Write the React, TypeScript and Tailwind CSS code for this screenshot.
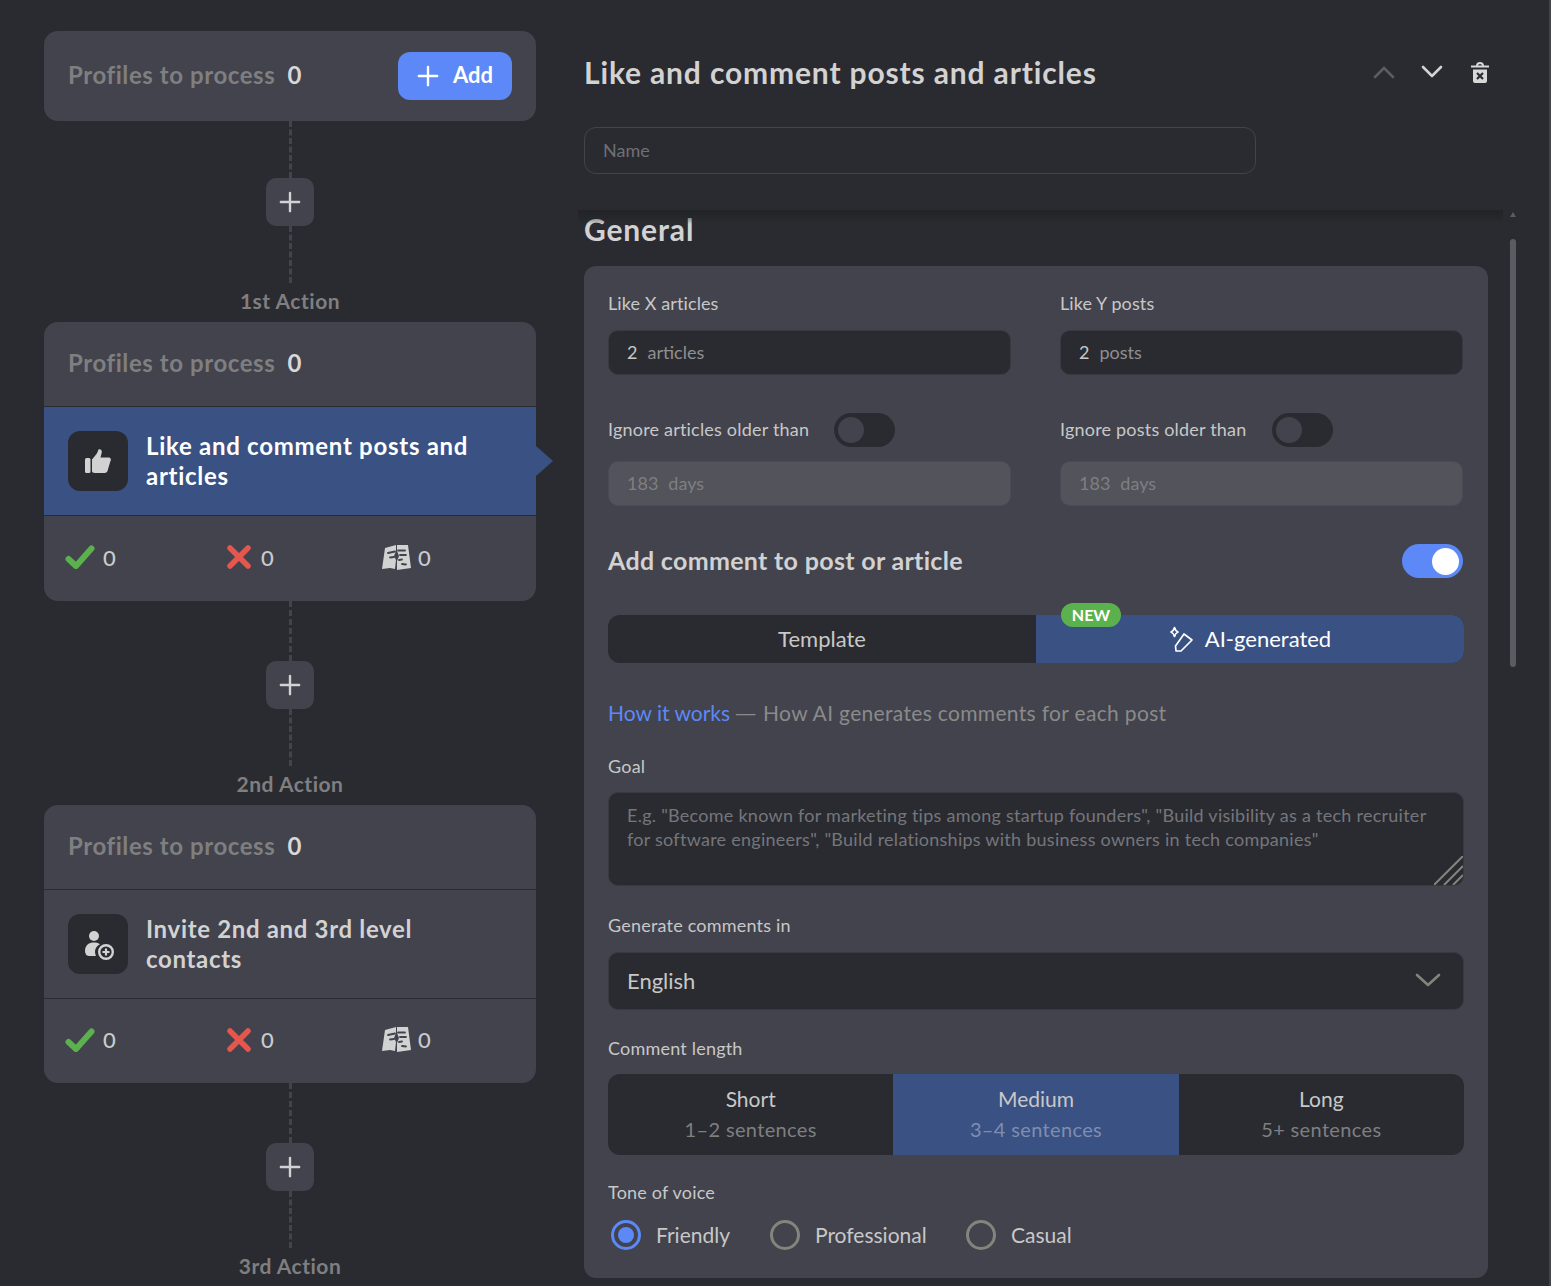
import React from "react";

const Plus = ({ s = 24, c = "#fff", w = 2.6 }: { s?: number; c?: string; w?: number }) => (
  <svg width={s} height={s} viewBox="0 0 24 24" fill="none" stroke={c} strokeWidth={w} strokeLinecap="round">
    <path d="M12 2v20M2 12h20" />
  </svg>
);

const Check = () => (
  <svg width="30" height="24" viewBox="0 0 30 24" fill="none" stroke="#5cb14f" strokeWidth="6" strokeLinecap="round" strokeLinejoin="round">
    <path d="M3.500 14l7.500 7L26.500 3.500" />
  </svg>
);
const Cross = () => (
  <svg width="26" height="24" viewBox="0 0 26 24" fill="none" stroke="#e5574e" strokeWidth="5.500" strokeLinecap="round">
    <path d="M4 3l18 18M22 3L4 21" />
  </svg>
);
const Torn = () => (
  <svg width="30" height="27" viewBox="0 0 30 27" fill="#d2d2d2">
    <path d="M3 4L14 1v6l-2 5 2 4-1 9-5-1-8 1z" />
    <path d="M15 1h11l3 23-7 1-7 1v-9l2-5-2-5z" />
    <g stroke="#42434c" strokeWidth="1.800" fill="none" strokeLinecap="round">
      <path d="M6 9l7-1.500M8 13.500l4-.5M16 6.500h7M18 11h6M17 16l3-.5M20 20l4 .5" />
    </g>
  </svg>
);

const Thumb = () => (
  <svg width="26" height="24" viewBox="0 0 26 24" fill="#d2d2d2">
    <rect x="0" y="9" width="5.500" height="15" rx="1.500" />
    <path d="M7 10.500L11.500 5C12.500 3.500 13 2 13.500 .5 16-.5 17.500 2 16.500 4.500L15.500 8.500H24C26 8.500 26.300 11 25.300 12.500L22.500 22C22 23.500 20.500 24 19 24H10C8 24 7 23 7 22z" />
  </svg>
);

const Stats = ({ h = 85 }: { h?: number }) => (
  <div className="flex items-center pl-[21px] pb-[3px] text-[#c9cbd0] text-[22px] font-medium" style={{ height: h }}>
    <div className="w-[161px] flex items-center gap-[8px]"><Check /><span>0</span></div>
    <div className="w-[156px] flex items-center gap-[9px]"><Cross /><span>0</span></div>
    <div className="flex items-center gap-[6px]"><Torn /><span>0</span></div>
  </div>
);

const Profiles = ({ h = 84, add = false }: { h?: number; add?: boolean }) => (
  <div className="flex items-center justify-between px-[24px]" style={{ height: h }}>
    <div className="flex items-center gap-[12px] text-[24px] font-bold tracking-[0.58px] pb-[2px]">
      <span className="text-[#7f7f80]">Profiles to process</span>
      <span className="text-[#d8d8d8]">0</span>
    </div>
    {add && (
      <div className="w-[114px] h-[48px] rounded-[12px] bg-[#5c89f7] flex items-center justify-center gap-[14px] text-white text-[22px] font-bold">
        <Plus s={22} />
        <span className="pb-[3px]">Add</span>
      </div>
    )}
  </div>
);

const Connector = ({ label, top = 60 }: { label: string; top?: number }) => (
  <div className="flex flex-col items-center">
    <div className="border-l-[3px] border-dashed border-[#42434c]" style={{ height: top }} />
    <div className="w-[48px] h-[48px] rounded-[10px] bg-[#42434c] flex items-center justify-center"><Plus s={22} c="#d2d2d2" /></div>
    <div className="h-[57px] border-l-[3px] border-dashed border-[#42434c]" />
    <div className="h-[39px] pb-[3px] flex items-center text-[21px] font-bold tracking-[0.5px] text-[#7f7f80]">{label}</div>
  </div>
);

const ActionIcon = ({ children }: { children: React.ReactNode }) => (
  <div className="w-[60px] h-[60px] shrink-0 rounded-[12px] bg-[#2a2b30] flex items-center justify-center text-[#d2d2d2]">{children}</div>
);

const PersonPlus = () => (
  <svg width="32" height="32" viewBox="0 0 32 32" fill="#d2d2d2">
    <circle cx="12" cy="8" r="5" />
    <path d="M3 23c0-6 4-8.500 9-8.500 3 0 4.500 .7 6 1.700-3 1.500-5 4.300-5 7.300 0 2 .5 3 1 4.500H7c-3 0-4-3-4-5.500z" />
    <circle cx="24" cy="24" r="6.800" fill="none" stroke="#d2d2d2" strokeWidth="2.400" />
    <path d="M24 20.500v7M20.500 24h7" stroke="#d2d2d2" strokeWidth="2.200" />
  </svg>
);

const Field = ({ label, value, unit }: { label: string; value: string; unit: string }) => (
  <div className="w-[403px]">
    <div className="h-[24px] pb-[2px] flex items-center text-[18px] text-[#c8c8c8] tracking-[0.1px]">{label}</div>
    <div className="mt-[14px] h-[45px] px-[18px] flex items-center gap-[10px] rounded-[10px] border border-[#383941] bg-[#2a2b30] text-[18px]">
      <span className="text-[#c8c8c8]">{value}</span>
      <span className="text-[#8f8f90]">{unit}</span>
    </div>
  </div>
);

const DisabledField = ({ label, gap }: { label: string; gap: number }) => (
  <div className="w-[403px]">
    <div className="h-[34px] flex items-center text-[18px] text-[#c8c8c8] tracking-[0.2px]">
      <span className="pb-[2px]" style={{ marginRight: gap }}>{label}</span>
      <div className="w-[61px] h-[34px] rounded-full bg-[#2a2b30] flex items-center pl-[4px]">
        <div className="w-[26px] h-[26px] rounded-full bg-[#42434c]" />
      </div>
    </div>
    <div className="mt-[14px] h-[45px] px-[18px] flex items-center gap-[10px] rounded-[10px] border border-[#4a4b54] bg-[#52535b] text-[18px] text-[#7f7f80]">
      <span>183</span>
      <span>days</span>
    </div>
  </div>
);

const Label = ({ children, className = "" }: { children: React.ReactNode; className?: string }) => (
  <div className={`h-[24px] pb-[2px] flex items-center text-[18px] text-[#c8c8c8] tracking-[0.2px] ${className}`}>{children}</div>
);

const Seg = ({ top, bottom, active = false }: { top: string; bottom: string; active?: boolean }) => (
  <div className={`flex-1 flex flex-col items-center justify-center gap-[6px] pb-[2px] ${active ? "bg-[#3a5183]" : ""}`}>
    <span className="text-[21px] leading-[24px] text-[#c8c8c8]">{top}</span>
    <span className={`text-[20px] leading-[24px] tracking-[0.35px] ${active ? "text-[#7f8db0]" : "text-[#7f7f80]"}`}>{bottom}</span>
  </div>
);

const Radio = ({ label, active = false, w }: { label: string; active?: boolean; w: number }) => (
  <div className="flex items-center gap-[15px]" style={{ width: w }}>
    <div className={`w-[30px] h-[30px] rounded-full border-[3px] flex items-center justify-center ${active ? "border-[#5c89f7]" : "border-[#85847c]"}`}>
      {active && <div className="w-[16px] h-[16px] rounded-full bg-[#5c89f7]" />}
    </div>
    <span className="text-[21px] text-[#c8c8c8]">{label}</span>
  </div>
);

export default function App() {
  return (
    <div className="h-[1286px] w-[1551px] overflow-hidden bg-[#2a2b30] flex" style={{ fontFamily: "Lato, 'Noto Sans', sans-serif" }}>
      {/* left column */}
      <div className="w-[492px] ml-[44px] pt-[31px] shrink-0">
        <div className="rounded-[14px] bg-[#42434c]"><Profiles h={90} add /></div>
        <Connector label="1st Action" top={57} />
        <div className="rounded-[14px] bg-[#42434c] relative">
          <Profiles />
          <div className="h-[110px] border-y border-[#2a2b30] bg-[#3a5183] flex items-center pl-[24px] gap-[18px] relative">
            <ActionIcon><Thumb /></ActionIcon>
            <div className="text-[24px] leading-[30px] font-bold tracking-[0.72px] text-white w-[350px]">Like and comment posts and articles</div>
            <div className="absolute right-[-17px] top-[39px] w-[17px] h-[30px] bg-[#3a5183] [clip-path:polygon(0_0,100%_50%,0_100%)]" />
          </div>
          <Stats />
        </div>
        <Connector label="2nd Action" />
        <div className="rounded-[14px] bg-[#42434c]">
          <Profiles />
          <div className="h-[110px] border-y border-[#2a2b30] flex items-center pl-[24px] gap-[18px]">
            <ActionIcon><PersonPlus /></ActionIcon>
            <div className="text-[24px] leading-[30px] font-bold tracking-[0.67px] text-[#d2d2d2] w-[340px]">Invite 2nd and 3rd level contacts</div>
          </div>
          <Stats h={84} />
        </div>
        <Connector label="3rd Action" />
      </div>

      {/* right column */}
      <div className="ml-[42px] w-[938px] shrink-0">
        <div className="w-[914px] pl-[6px] pt-[53px] h-[127px] flex items-start justify-between">
          <div className="text-[30px] leading-[38px] font-bold tracking-[0.85px] text-[#d2d2d2]">Like and comment posts and articles</div>
          <div className="flex items-center gap-[24px] pt-[8px]">
            <svg width="24" height="24" viewBox="0 0 24 24" fill="none" stroke="#5b5c63" strokeWidth="2.600" strokeLinecap="round" strokeLinejoin="round"><path d="M3 16l9-9 9 9" /></svg>
            <svg width="24" height="24" viewBox="0 0 24 24" fill="none" stroke="#d2d2d2" strokeWidth="2.600" strokeLinecap="round" strokeLinejoin="round"><path d="M3 6l9 9 9-9" /></svg>
            <svg width="24" height="24" viewBox="0 0 24 24"><path d="M3 5.500h18" stroke="#d8d8d8" strokeWidth="2" /><path d="M9 5c0-4 6-4 6 0" fill="none" stroke="#d8d8d8" strokeWidth="2" /><path d="M5 8.500h14V20a2 2 0 0 1-2 2H7a2 2 0 0 1-2-2z" fill="#d8d8d8" /><path d="M9 12l6 6M15 12l-6 6" stroke="#2a2b30" strokeWidth="2.200" /></svg>
          </div>
        </div>
        <div className="ml-[6px] w-[672px] h-[47px] rounded-[12px] border border-[#42434c] flex items-center px-[18px] text-[18px] text-[#6f7076]">Name</div>

        <div className="mt-[36px] flex">
          <div className="w-[925px] pt-[3px] pl-[6px] relative">
            <div className="absolute left-0 right-0 top-0 h-[14px] bg-gradient-to-b from-[#222327] to-transparent" />
            <div className="h-[34px] pb-[2px] flex items-center text-[30px] font-bold tracking-[0.85px] text-[#d2d2d2]">General</div>
            <div className="mt-[19px] w-[904px] h-[1012px] rounded-[12px] bg-[#42434c] px-[24px] pt-[26px]">
              <div className="flex justify-between w-[855px]">
                <Field label="Like X articles" value="2" unit="articles" />
                <Field label="Like Y posts" value="2" unit="posts" />
              </div>
              <div className="mt-[38px] flex justify-between w-[855px]">
                <DisabledField label="Ignore articles older than" gap={25} />
                <DisabledField label="Ignore posts older than" gap={25} />
              </div>
              <div className="mt-[38px] h-[34px] flex items-center justify-between w-[855px]">
                <span className="text-[25px] font-bold tracking-[0.32px] text-[#d2d2d2]">Add comment to post or article</span>
                <div className="w-[61px] h-[34px] rounded-full bg-[#5c89f7] flex items-center justify-end pr-[4px]">
                  <div className="w-[27px] h-[27px] rounded-full bg-white" />
                </div>
              </div>
              <div className="mt-[37px] flex h-[48px] w-[856px] rounded-[12px] bg-[#2a2b30] relative">
                <div className="w-[428px] pb-[2px] flex items-center justify-center text-[22px] text-[#c8c8c8]">Template</div>
                <div className="w-[428px] rounded-r-[12px] bg-[#3a5183] flex items-center justify-center gap-[10px] text-[22px] text-white">
                  <svg width="26" height="26" viewBox="0 0 26 26" fill="none" stroke="#fff" strokeWidth="1.700" strokeLinejoin="round">
                    <path d="M15 8l8 6-11 11-5 0-.5-5z" />
                    <path d="M5.500 1.500c.5 2.500 1.500 3.500 3.500 4.500-2 1-3 2-3.500 4.500C5 8 4 7 2 6c2-1 3-2 3.500-4.500z" />
                  </svg>
                  <span className="pb-[2px]">AI-generated</span>
                </div>
                <div className="absolute left-[453px] top-[-12px] w-[60px] h-[24px] rounded-full bg-[#5cb14f] flex items-center justify-center text-[16px] font-bold text-white pb-[1px]">NEW</div>
              </div>
              <div className="mt-[37px] h-[28px] pb-[2px] flex items-center gap-[6px] text-[21px]">
                <span className="text-[#5c89f7]">How it works</span>
                <span className="w-[23px] -ml-[2px] text-[#8a8a8b] inline-block scale-x-[1.4] origin-left">—</span>
                <span className="text-[#8a8a8b] tracking-[0.33px]">How AI generates comments for each post</span>
              </div>
              <Label className="mt-[27px]">Goal</Label>
              <div className="mt-[13px] h-[94px] w-[856px] rounded-[10px] border border-[#383941] bg-[#2a2b30] pl-[18px] pr-[24px] pt-[10px] text-[18px] leading-[24px] tracking-[0.26px] text-[#75767c] relative overflow-hidden">
                E.g. "Become known for marketing tips among startup founders", "Build visibility as a tech recruiter for software engineers", "Build relationships with business owners in tech companies"
                <svg className="absolute right-0 bottom-0" width="29" height="29" viewBox="0 0 29 29" stroke="#85847c" strokeWidth="2"><path d="M0 29L29 0M10 29L29 10M19 29L29 19" /></svg>
              </div>
              <Label className="mt-[28px]">Generate comments in</Label>
              <div className="mt-[14px] h-[58px] w-[856px] rounded-[10px] border border-[#383941] bg-[#2a2b30] px-[18px] pb-[2px] flex items-center justify-between text-[22px] text-[#c8c8c8]">
                <span>English</span>
                <svg className="mr-[4px]" width="26" height="16" viewBox="0 0 26 16" fill="none" stroke="#85847c" strokeWidth="2.600" strokeLinecap="round" strokeLinejoin="round"><path d="M2 3l11 10L24 3" /></svg>
              </div>
              <Label className="mt-[27px]">Comment length</Label>
              <div className="mt-[13px] h-[81px] w-[856px] rounded-[12px] bg-[#2a2b30] overflow-hidden flex">
                <Seg top="Short" bottom="1–2 sentences" />
                <Seg top="Medium" bottom="3–4 sentences" active />
                <Seg top="Long" bottom="5+ sentences" />
              </div>
              <Label className="mt-[26px]">Tone of voice</Label>
              <div className="mt-[14px] pl-[3px] flex items-center">
                <Radio label="Friendly" active w={159} />
                <Radio label="Professional" w={196} />
                <Radio label="Casual" w={150} />
              </div>
            </div>
          </div>
          <div className="ml-[7px] w-[6px] flex flex-col items-center mt-[2px]">
            <div className="w-0 h-0 border-x-[3px] border-x-transparent border-b-[5px] border-b-[#5b5c63]" />
            <div className="mt-[22px] w-[6px] h-[428px] rounded-full bg-[#5b5c63]" />
          </div>
        </div>
      </div>
      <div className="ml-auto w-[2px] bg-[#42434c]" />
    </div>
  );
}
